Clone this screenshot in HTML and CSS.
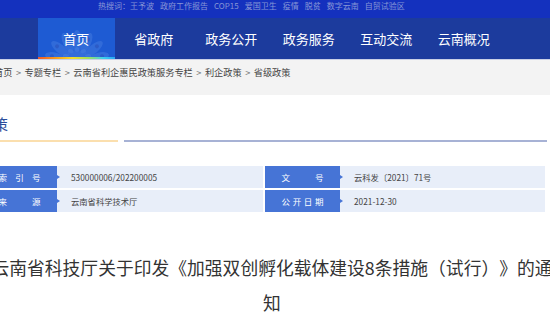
FILE: index.html
```html
<!DOCTYPE html>
<html lang="zh-CN">

<head>
  <meta charset="UTF-8">
  <meta name="viewport" content="width=device-width, initial-scale=1.0">
  <title>云南省科技厅关于印发《加强双创孵化载体建设8条措施（试行）》的通知</title>
  <link rel="stylesheet" href="styles.css">
</head>

<body>
  <!-- hot search words -->
  <div class="topbar">
    <div class="hot">
      <span class="hot-label">热搜词：</span>
      <span class="hot-word">王予波</span>
      <span class="hot-word">政府工作报告</span>
      <span class="hot-word">COP15</span>
      <span class="hot-word">爱国卫生</span>
      <span class="hot-word">疫情</span>
      <span class="hot-word">脱贫</span>
      <span class="hot-word">数字云南</span>
      <span class="hot-word">自贸试验区</span>
    </div>
  </div>

  <!-- main nav -->
  <div class="nav">
    <ul class="nav-list">
      <li class="nav-item active">
        <svg class="peacock" viewBox="0 0 78 41" width="78" height="41">
          <g transform="translate(39 45)">
            <g fill="#3f76de" opacity="0.6">
              <ellipse cx="0" cy="-22" rx="4.5" ry="11" transform="rotate(-75)" />
              <ellipse cx="0" cy="-22" rx="4.5" ry="11" transform="rotate(-50)" />
              <ellipse cx="0" cy="-22" rx="4.5" ry="11" transform="rotate(-25)" />
              <ellipse cx="0" cy="-22" rx="4.5" ry="11" />
              <ellipse cx="0" cy="-22" rx="4.5" ry="11" transform="rotate(25)" />
              <ellipse cx="0" cy="-22" rx="4.5" ry="11" transform="rotate(50)" />
              <ellipse cx="0" cy="-22" rx="4.5" ry="11" transform="rotate(75)" />
            </g>
            <g fill="#2a55c0" opacity="0.7">
              <circle cx="0" cy="-26" r="2" transform="rotate(-75)" />
              <circle cx="0" cy="-26" r="2" transform="rotate(-50)" />
              <circle cx="0" cy="-26" r="2" transform="rotate(-25)" />
              <circle cx="0" cy="-26" r="2" />
              <circle cx="0" cy="-26" r="2" transform="rotate(25)" />
              <circle cx="0" cy="-26" r="2" transform="rotate(50)" />
              <circle cx="0" cy="-26" r="2" transform="rotate(75)" />
            </g>
            <g fill="#4a80e2" opacity="0.5">
              <ellipse cx="0" cy="-10" rx="3" ry="6" transform="rotate(-60)" />
              <ellipse cx="0" cy="-10" rx="3" ry="6" transform="rotate(-30)" />
              <ellipse cx="0" cy="-10" rx="3" ry="6" />
              <ellipse cx="0" cy="-10" rx="3" ry="6" transform="rotate(30)" />
              <ellipse cx="0" cy="-10" rx="3" ry="6" transform="rotate(60)" />
            </g>
          </g>
        </svg>
        <span class="nav-text">首页</span>
      </li>
      <li class="nav-item"><span class="nav-text">省政府</span></li>
      <li class="nav-item"><span class="nav-text">政务公开</span></li>
      <li class="nav-item"><span class="nav-text">政务服务</span></li>
      <li class="nav-item"><span class="nav-text">互动交流</span></li>
      <li class="nav-item"><span class="nav-text">云南概况</span></li>
    </ul>
  </div>

  <!-- breadcrumb -->
  <div class="crumb">
    <div class="crumb-inner">
      <span>首页</span><span class="sep">&gt;</span>
      <span>专题专栏</span><span class="sep">&gt;</span>
      <span>云南省利企惠民政策服务专栏</span><span class="sep">&gt;</span>
      <span>利企政策</span><span class="sep">&gt;</span>
      <span>省级政策</span>
    </div>
  </div>

  <div class="main">
    <div class="col-head">
      <span class="col-name">省级政策</span>
      <span class="col-rest"></span>
    </div>

    <div class="meta">
      <div class="label"><span class="lbl-text"><i>索</i><i>引</i><i>号</i></span></div>
      <div class="value value-a">530000006/202200005</div>
      <div class="label"><span class="lbl-text"><i>文</i><i>号</i></span></div>
      <div class="value">云科发〔2021〕71号</div>

      <div class="label"><span class="lbl-text"><i>来</i><i>源</i></span></div>
      <div class="value value-a">云南省科学技术厅</div>
      <div class="label"><span class="lbl-text"><i>公</i><i>开</i><i>日</i><i>期</i></span></div>
      <div class="value">2021-12-30</div>
    </div>

    <h1 class="doc-title">云南省科技厅关于印发《加强双创孵化载体建设8条措施（试行）》的通知</h1>
  </div>
</body>

</html>
```

FILE: styles.css
```css
body {
  margin: 0;
  padding: 0;
  font-family: "Noto Sans CJK SC", "Noto Sans", sans-serif;
  background-color: #fff;
  overflow: hidden;
  text-spacing-trim: space-all;
}

.topbar {
  height: 18px;
  background-color: #1431be;
}

.hot {
  display: flex;
  padding-left: 98px;
  font-size: 8px;
  line-height: 11px;
  color: #8796d6;
  white-space: nowrap;
}

.hot-word {
  margin-right: 6px;
}

.nav {
  height: 41px;
  background-color: #1c3b9d;
}

.nav-list {
  display: flex;
  margin: 0;
  padding: 0 0 0 37.5px;
  list-style: none;
}

.nav-item {
  position: relative;
  width: 77.5px;
  height: 41px;
  display: flex;
  align-items: center;
  justify-content: center;
  color: #fff;
  font-size: 13px;
}

.nav-item.active {
  background-color: #1e5bd3;
}

.nav-item.active::after {
  content: '';
  position: absolute;
  left: 0;
  right: 0;
  bottom: 0;
  height: 2px;
  background: linear-gradient(to right, #f0582a, #f5a21c 25%, #f3de2a 45%, #9fe05a 65%, #3ccff0 85%, #2aa6f2);
}

.peacock {
  position: absolute;
  left: 0;
  top: 0;
}

.nav-text {
  position: relative;
}

.crumb {
  height: 35px;
  background-color: #f3f3f3;
  border-top: 1px solid #c8cfe6;
}

.crumb-inner {
  display: flex;
  margin-left: -6px;
  font-size: 9.2px;
  line-height: 24px;
  color: #444;
  white-space: nowrap;
}

.sep {
  padding: 0 3.5px;
  color: #777;
}

.main {
  margin-left: -18px;
  width: 565px;
}

.col-head {
  display: flex;
  margin: 19px 0 0 -34px;
}

.col-name {
  width: 170px;
  padding-bottom: 6px;
  font-size: 15px;
  line-height: 20px;
  color: #2b4c9b;
  border-bottom: 2px solid #fbdfae;
}

.col-rest {
  flex: 1;
  margin-left: 6px;
  border-bottom: 2px solid #a7b2d5;
}

.meta {
  display: grid;
  grid-template-columns: 75px 208px 75px 205px;
  grid-auto-rows: 22px;
  row-gap: 2px;
  margin-top: 24px;
}

.label {
  position: relative;
  display: flex;
  align-items: center;
  justify-content: center;
  background-color: #4674d6;
  color: #fff;
  font-size: 8.5px;
}

.label::after {
  content: '';
  position: absolute;
  right: -3px;
  top: 50%;
  margin-top: -2.5px;
  border-left: 3px solid #4674d6;
  border-top: 2.5px solid transparent;
  border-bottom: 2.5px solid transparent;
  z-index: 1;
}

.lbl-text {
  display: flex;
  justify-content: space-between;
  width: 42px;
}

.lbl-text i {
  font-style: normal;
}

.value {
  display: flex;
  align-items: center;
  padding-left: 14px;
  background-color: #e8eef9;
  font-size: 8.3px;
  color: #444;
  white-space: nowrap;
}

.value-a {
  margin-right: 2px;
}

.doc-title {
  width: 566px;
  margin: 38px 0 0 7px;
  font-size: 17.8px;
  line-height: 35px;
  font-weight: normal;
  text-align: center;
  color: #333;
}
```
